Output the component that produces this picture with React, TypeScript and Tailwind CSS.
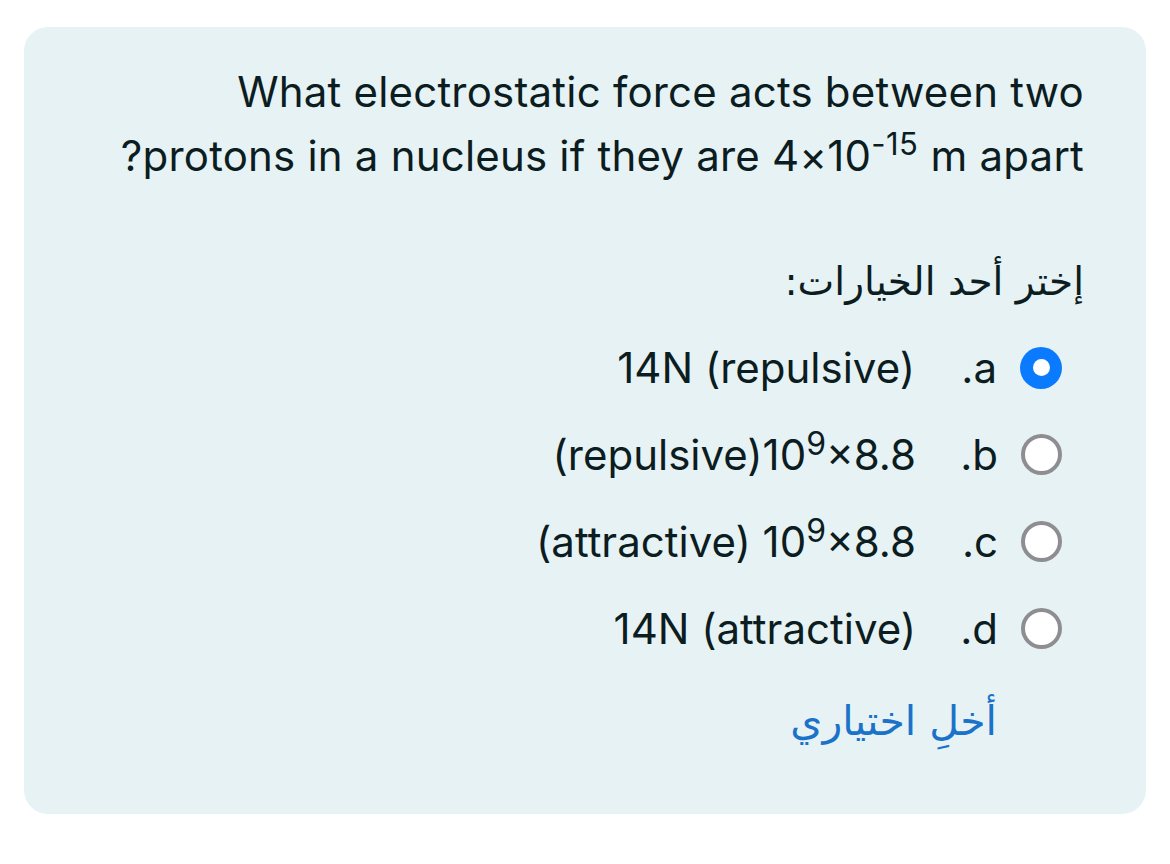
import React from 'react';

type Option = {
  key: string;
  content: React.ReactNode;
  selected?: boolean;
};

const options: Option[] = [
  { key: 'a.', content: <>14N (repulsive)</>, selected: true },
  {
    key: 'b.',
    content: (
      <>
        (repulsive)10<sup className="text-[32px] top-[-15px]">9</sup>×8.8
      </>
    ),
  },
  {
    key: 'c.',
    content: (
      <>
        (attractive) 10<sup className="text-[32px] top-[-15px]">9</sup>×8.8
      </>
    ),
  },
  { key: 'd.', content: <>14N (attractive)</> },
];

function Radio({ checked }: { checked?: boolean }) {
  if (checked) {
    return (
      <span className="flex h-[42px] w-[42px] shrink-0 items-center justify-center rounded-full bg-[#0a7bff]">
        <span className="h-[17px] w-[17px] rounded-full bg-white" />
      </span>
    );
  }
  return <span className="h-[41px] w-[41px] shrink-0 rounded-full border-[4px] border-[#8e8e92] bg-white" />;
}

export default function App() {
  return (
    <div className="min-h-screen bg-white px-[24px] pt-[27px] font-['Inter','Noto_Sans','DejaVu_Sans',sans-serif] text-[#0c1d21]">
      <div dir="rtl" className="h-[787px] rounded-[24px] bg-[#e7f2f5] px-[62px] pt-[33px]">
        <p className="text-[42px] leading-[64px] tracking-[0.2px]">
          What electrostatic force acts between two
          <br />
          protons in a nucleus if they are 4×10<sup className="text-[31px] top-[-16px] tracking-[0.5px]">-15</sup> m apart?
        </p>

        <p className="mt-[68px] font-['DejaVu_Sans',sans-serif] text-[39px] leading-[52px]">إختر أحد الخيارات:</p>

        <div className="mt-[16px] mr-[22px]">
          {options.map((o) => (
            <div key={o.key} className="flex h-[87px] items-center gap-[23px]">
              <Radio checked={o.selected} />
              <span className="w-[59px] shrink-0 text-[42px]">{o.key}</span>
              <span dir="ltr" className="text-[42px] leading-[50px]">
                {o.content}
              </span>
            </div>
          ))}
        </div>

        <button className="mt-[23px] mr-[87px] font-['DejaVu_Sans',sans-serif] text-[41px] leading-[52px] text-[#1b73c9]">
          أخلِ اختياري
        </button>
      </div>
    </div>
  );
}
